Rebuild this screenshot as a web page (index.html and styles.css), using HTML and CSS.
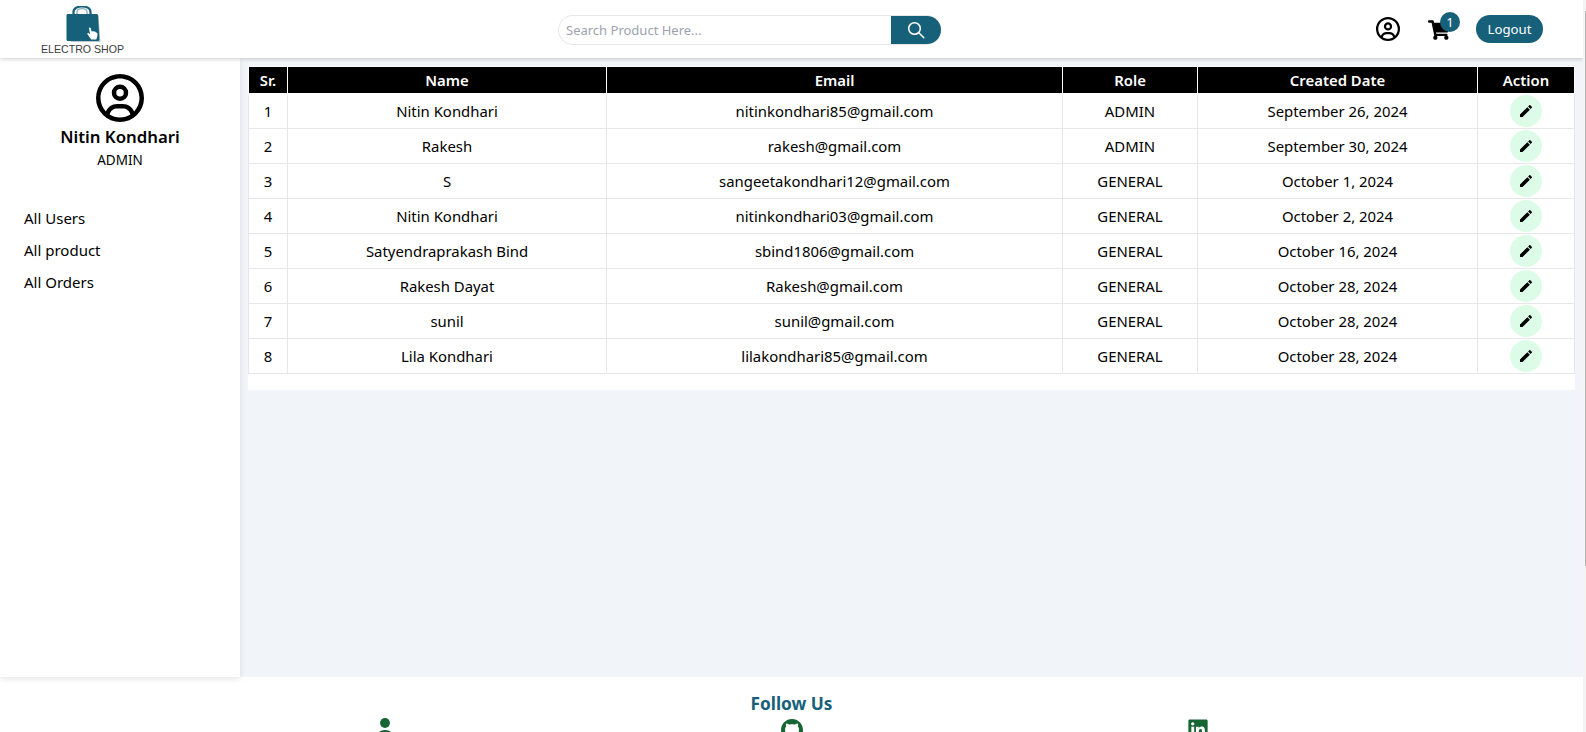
FILE: index.html
```html
<!DOCTYPE html>
<html lang="en">
<head>
  <meta charset="UTF-8">
  <title>Electro Shop</title>
  <link rel="stylesheet" href="styles.css">
</head>
<body>
  <svg class="icon-defs" width="0" height="0">
    <symbol id="icon-user" viewBox="0 0 512 512">
      <path d="M406.5 399.6C387.4 352.9 341.5 320 288 320H224c-53.5 0-99.4 32.9-118.5 79.6C69.9 362.2 48 311.7 48 256C48 141.1 141.1 48 256 48s208 93.1 208 208c0 55.7-21.9 106.2-57.5 143.6zm-40.1 32.7C334.4 452.4 296.6 464 256 464s-78.4-11.6-110.5-31.7c7.3-36.7 39.7-64.3 78.5-64.3h64c38.8 0 71.2 27.6 78.5 64.3zM256 512A256 256 0 1 0 256 0a256 256 0 1 0 0 512zm0-272a40 40 0 1 1 0-80 40 40 0 1 1 0 80zm-88-40a88 88 0 1 0 176 0 88 88 0 1 0 -176 0z"/>
    </symbol>
    <symbol id="icon-edit" viewBox="0 0 24 24">
      <path d="M3 17.25V21h3.75L17.81 9.94l-3.75-3.75L3 17.25zM20.71 7.04c.39-.39.39-1.02 0-1.41l-2.34-2.34c-.39-.39-1.02-.39-1.41 0l-1.83 1.83 3.75 3.75 1.83-1.83z"/>
    </symbol>
  </svg>

  <div class="app">
    <header class="topbar">
      <a class="logo">
        <svg class="logo-bag" width="40" height="38" viewBox="0 0 40 38">
          <path d="M10.500 10V6c0-7.500 17-7.500 17 0v4" fill="none" stroke="#17607a" stroke-width="2.200"/>
          <path d="M14 10V6c0-4.500 10-4.500 10 0v4" fill="none" stroke="#8fb0bc" stroke-width="1.400"/>
          <path d="M6 9l29.500 .5 2 26.500H8z" fill="#8a9aa2" opacity="0.55"/>
          <path d="M3.500 9.500c0-.8.6-1.500 1.500-1.500h28.500c.9 0 1.500.6 1.600 1.500l1.300 24c0 1-.7 1.500-1.500 1.500H5c-.9 0-1.500-.6-1.500-1.500z" fill="#17607a"/>
          <path d="M26 22.500c-.2-1.200 1.400-1.500 1.700-.3l.9 3.300.5-.2c.8-.3 1.600-.2 2.100.2 1 0 1.600.3 2 .9.800.1 1.300.8 1.300 1.700 0 2.200-.5 4-1.300 5.400h-5l-3.700-5.200c-.6-1 .6-1.800 1.300-1l1.300 1.300z" fill="#fff"/>
        </svg>
        <span class="logo-text">ELECTRO SHOP</span>
      </a>

      <form class="search">
        <input class="search-input" type="text" placeholder="Search Product Here...">
        <button class="search-btn" type="button">
          <svg width="18" height="18" viewBox="0 0 18 18" fill="none" stroke="#fff" stroke-width="1.500" stroke-linecap="round">
            <circle cx="7.500" cy="7.500" r="5.800"/>
            <path d="M11.800 11.800l5 5"/>
          </svg>
        </button>
      </form>

      <div class="actions">
        <svg class="account-icon"><use href="#icon-user"/></svg>
        <div class="cart">
          <svg width="22" height="20" viewBox="0 0 576 512">
            <path d="M528.12 301.319l47.273-208C578.806 78.301 567.391 64 551.99 64H159.208l-9.166-44.81C147.758 8.021 137.93 0 126.529 0H24C10.745 0 0 10.745 0 24v16c0 13.255 10.745 24 24 24h69.883l70.248 343.435C147.325 417.1 136 435.222 136 456c0 30.928 25.072 56 56 56s56-25.072 56-56c0-15.674-6.447-29.835-16.824-40h209.647C430.447 426.165 424 440.326 424 456c0 30.928 25.072 56 56 56s56-25.072 56-56c0-22.172-12.888-41.332-31.579-50.405l5.517-24.276c3.413-15.018-8.002-29.319-23.403-29.319H218.117l-6.545-32h293.145c11.206 0 20.92-7.754 23.403-18.681z"/>
          </svg>
          <span class="cart-count">1</span>
        </div>
        <button class="logout" type="button">Logout</button>
      </div>
    </header>

    <div class="content">
      <aside class="sidebar">
        <div class="profile">
          <svg class="profile-icon"><use href="#icon-user"/></svg>
          <p class="profile-name">Nitin Kondhari</p>
          <p class="profile-role">ADMIN</p>
        </div>
        <nav class="side-nav">
          <a>All Users</a>
          <a>All product</a>
          <a>All Orders</a>
        </nav>
      </aside>

      <main class="main">
        <div class="panel">
          <table class="user-table">
            <colgroup>
              <col class="col-sr"><col class="col-name"><col class="col-email"><col class="col-role"><col class="col-date"><col class="col-action">
            </colgroup>
            <thead>
              <tr><th>Sr.</th><th>Name</th><th>Email</th><th>Role</th><th>Created Date</th><th>Action</th></tr>
            </thead>
            <tbody>
              <tr><td>1</td><td>Nitin Kondhari</td><td>nitinkondhari85@gmail.com</td><td>ADMIN</td><td>September 26, 2024</td><td><button class="edit-btn" type="button"><svg class="edit-icon"><use href="#icon-edit"/></svg></button></td></tr>
              <tr><td>2</td><td>Rakesh</td><td>rakesh@gmail.com</td><td>ADMIN</td><td>September 30, 2024</td><td><button class="edit-btn" type="button"><svg class="edit-icon"><use href="#icon-edit"/></svg></button></td></tr>
              <tr><td>3</td><td>S</td><td>sangeetakondhari12@gmail.com</td><td>GENERAL</td><td>October 1, 2024</td><td><button class="edit-btn" type="button"><svg class="edit-icon"><use href="#icon-edit"/></svg></button></td></tr>
              <tr><td>4</td><td>Nitin Kondhari</td><td>nitinkondhari03@gmail.com</td><td>GENERAL</td><td>October 2, 2024</td><td><button class="edit-btn" type="button"><svg class="edit-icon"><use href="#icon-edit"/></svg></button></td></tr>
              <tr><td>5</td><td>Satyendraprakash Bind</td><td>sbind1806@gmail.com</td><td>GENERAL</td><td>October 16, 2024</td><td><button class="edit-btn" type="button"><svg class="edit-icon"><use href="#icon-edit"/></svg></button></td></tr>
              <tr><td>6</td><td>Rakesh Dayat</td><td>Rakesh@gmail.com</td><td>GENERAL</td><td>October 28, 2024</td><td><button class="edit-btn" type="button"><svg class="edit-icon"><use href="#icon-edit"/></svg></button></td></tr>
              <tr><td>7</td><td>sunil</td><td>sunil@gmail.com</td><td>GENERAL</td><td>October 28, 2024</td><td><button class="edit-btn" type="button"><svg class="edit-icon"><use href="#icon-edit"/></svg></button></td></tr>
              <tr><td>8</td><td>Lila Kondhari</td><td>lilakondhari85@gmail.com</td><td>GENERAL</td><td>October 28, 2024</td><td><button class="edit-btn" type="button"><svg class="edit-icon"><use href="#icon-edit"/></svg></button></td></tr>
            </tbody>
          </table>
        </div>
      </main>
    </div>

    <footer class="footer">
      <h2 class="footer-title">Follow Us</h2>
      <div class="social">
        <svg class="social-icon" viewBox="0 0 24 24">
          <circle cx="12" cy="5.400" r="5.400"/>
          <path d="M2 24c0-7 4-11 10-11s10 4 10 11z"/>
        </svg>
        <svg class="social-icon" viewBox="0 -0.7 16 16">
          <path d="M8 0C3.580 0 0 3.580 0 8c0 3.540 2.290 6.530 5.470 7.590.4.070.55-.17.55-.38 0-.19-.01-.82-.01-1.490-2.010.37-2.530-.49-2.690-.94-.09-.23-.48-.94-.82-1.130-.28-.15-.68-.52-.01-.53.63-.01 1.080.58 1.230.82.72 1.210 1.870.87 2.330.66.07-.52.28-.87.51-1.070-1.780-.2-3.640-.89-3.640-3.950 0-.87.31-1.590.82-2.150-.08-.2-.36-1.020.08-2.120 0 0 .67-.21 2.200.82.64-.18 1.320-.27 2-.27s1.360.09 2 .27c1.530-1.040 2.200-.82 2.200-.82.44 1.100.16 1.920.08 2.120.51.56.82 1.270.82 2.150 0 3.070-1.870 3.750-3.650 3.950.29.25.54.73.54 1.480 0 1.070-.01 1.930-.01 2.200 0 .21.15.46.55.38A8.013 8.013 0 0016 8c0-4.420-3.580-8-8-8z"/>
        </svg>
        <svg class="social-icon" viewBox="0 0 448 512">
          <path d="M416 32H31.900C14.300 32 0 46.500 0 64.300v383.400C0 465.500 14.300 480 31.900 480H416c17.600 0 32-14.500 32-32.300V64.300c0-17.800-14.400-32.300-32-32.300zM135.400 416H69V202.200h66.500V416zm-33.200-243c-21.300 0-38.500-17.300-38.500-38.500S80.900 96 102.200 96c21.200 0 38.500 17.300 38.500 38.500 0 21.300-17.200 38.500-38.500 38.500zm282.100 243h-66.400V312c0-24.800-.5-56.700-34.500-56.700-34.600 0-39.900 27-39.900 54.900V416h-66.400V202.200h63.700v29.200h.9c8.900-16.800 30.600-34.500 62.900-34.500 67.200 0 79.700 44.300 79.700 101.900V416z"/>
        </svg>
      </div>
    </footer>
  </div>

  <div class="scrollbar"><div class="scrollbar-thumb"></div></div>
</body>
</html>
```

FILE: styles.css
```css
* {
  box-sizing: border-box;
}
html, body {
  margin: 0;
  height: 732px;
  overflow: hidden;
}
body {
  display: flex;
  background-color: #fff;
  color: #000;
  font-family: "Noto Sans", "Open Sans", sans-serif;
  font-size: 15px;
}
p, h2 {
  margin: 0;
}
button {
  border: 0;
  padding: 0;
  font-family: inherit;
}
.icon-defs {
  position: absolute;
}
.app {
  flex: 1;
  min-width: 0;
  display: flex;
  flex-direction: column;
  height: 732px;
  overflow: hidden;
}
.scrollbar {
  width: 3px;
  height: 732px;
  padding: 11px 0 0 2px;
  background-color: #f4f4f4;
}
.scrollbar-thumb {
  height: 555px;
  background-color: #b5b5b5;
}

/* top bar */
.topbar {
  position: relative;
  z-index: 3;
  flex: none;
  height: 58px;
  display: flex;
  align-items: center;
  background-color: #fff;
  box-shadow: 0 1px 4px rgba(0, 0, 0, 0.2);
}
.logo {
  width: 85px;
  margin-left: 40px;
  display: flex;
  flex-direction: column;
  align-items: center;
  align-self: flex-start;
  padding-top: 6px;
}
.logo-bag {
  display: block;
}
.logo-text {
  margin-top: -1px;
  font-family: "Liberation Sans", sans-serif;
  font-size: 10.600px;
  line-height: 13px;
  color: #3c3c3c;
  white-space: nowrap;
}
.search {
  width: 383px;
  height: 30px;
  margin-top: 2px;
  margin-left: 433px;
  display: flex;
  border: 1px solid #e5e7eb;
  border-right: 0;
  border-radius: 15px;
}
.search-input {
  flex: 1;
  min-width: 0;
  border: 0;
  outline: 0;
  padding: 0 0 0 7px;
  background: transparent;
  font-family: inherit;
  font-size: 13px;
}
.search-input::placeholder {
  color: #9ca3af;
  opacity: 1;
}
.search-btn {
  width: 50px;
  display: flex;
  align-items: center;
  justify-content: center;
  background-color: #17607a;
  border-radius: 0 15px 15px 0;
}
.actions {
  margin-left: 435px;
  display: flex;
  align-items: center;
}
.account-icon {
  width: 24px;
  height: 24px;
  display: block;
}
.cart {
  position: relative;
  width: 22px;
  height: 20px;
  margin: 2px 26px 0 28px;
}
.cart svg {
  display: block;
}
.cart-count {
  position: absolute;
  top: -8px;
  left: 12px;
  width: 20px;
  height: 20px;
  display: flex;
  align-items: center;
  justify-content: center;
  border-radius: 50%;
  background-color: #17607a;
  color: #fff;
  font-size: 13px;
}
.logout {
  width: 67px;
  height: 28px;
  border-radius: 14px;
  background-color: #17607a;
  color: #fff;
  font-size: 13.200px;
}

/* sidebar + main */
.content {
  flex: none;
  height: 619px;
  display: flex;
  position: relative;
  z-index: 2;
}
.sidebar {
  flex: none;
  width: 240px;
  background-color: #fff;
  box-shadow: 0 2px 6px rgba(0, 0, 0, 0.1);
  position: relative;
  z-index: 1;
}
.profile {
  padding-top: 16px;
  display: flex;
  flex-direction: column;
  align-items: center;
}
.profile-icon {
  width: 48px;
  height: 48px;
  display: block;
}
.profile-name {
  margin-top: 2px;
  font-size: 16.800px;
  font-weight: 600;
  line-height: 26px;
}
.profile-role {
  font-size: 13.500px;
  line-height: 20px;
}
.side-nav {
  margin-top: 32px;
  padding-left: 24px;
  display: flex;
  flex-direction: column;
}
.side-nav a {
  height: 32px;
  line-height: 32px;
}
.main {
  flex: 1;
  min-width: 0;
  padding: 8px;
  background-color: #f1f5f9;
}
.panel {
  padding-bottom: 16px;
  background-color: #fff;
}
.user-table {
  width: 1327px;
  border-collapse: collapse;
  table-layout: fixed;
  font-size: 14.900px;
}
.col-sr { width: 39px; }
.col-name { width: 319px; }
.col-email { width: 456px; }
.col-role { width: 135px; }
.col-date { width: 280px; }
.col-action { width: 97px; }
.user-table th {
  height: 27px;
  padding: 0;
  border: 1px solid #fff;
  background-color: #000;
  color: #fff;
  font-weight: 600;
}
.user-table td {
  height: 35px;
  padding: 0;
  border: 1px solid #e5e7eb;
  text-align: center;
}
.edit-btn {
  width: 32px;
  height: 32px;
  display: block;
  margin: 0 auto;
  border-radius: 50%;
  background-color: #dcfce7;
}
.edit-icon {
  width: 16px;
  height: 16px;
  display: block;
  margin: 0 auto;
}

/* footer */
.footer {
  flex: none;
  background-color: #fff;
  text-align: center;
  padding-top: 14px;
}
.footer-title {
  font-size: 17.300px;
  font-weight: 700;
  line-height: 25px;
  color: #17607a;
}
.social {
  display: grid;
  grid-template-columns: 407px 406px 22px;
  padding-left: 374px;
  margin-top: 2px;
}
.social-icon {
  width: 22px;
  height: 22px;
  display: block;
  fill: #166534;
}
```
